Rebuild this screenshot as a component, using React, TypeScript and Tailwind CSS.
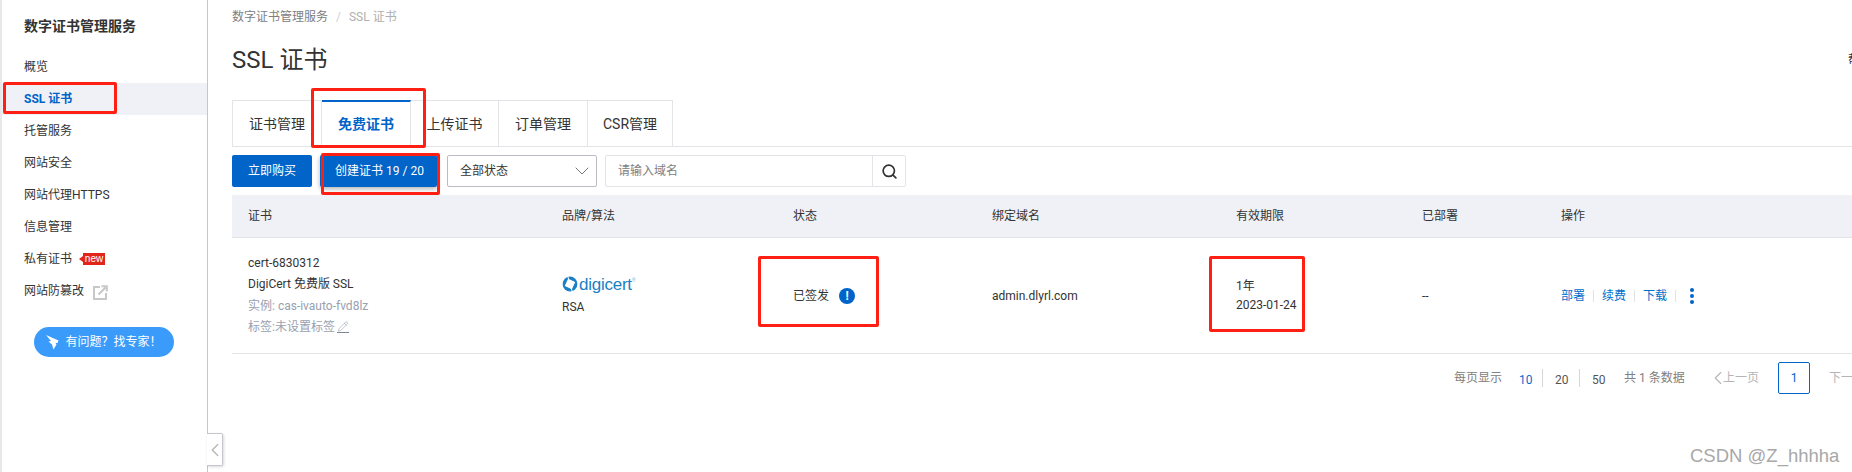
import React from 'react';
import { ChevronDown, ChevronLeft, Search, Pencil } from 'lucide-react';

const navItems = ['网站代理HTTPS', '信息管理'];

const columns = ['证书', '品牌/算法', '状态', '绑定域名', '有效期限', '已部署', '操作'];

const gridCols = 'grid grid-cols-[314px_231px_199px_244px_186px_139px_1fr]';

const NavItem: React.FC<{ active?: boolean; children: React.ReactNode }> = ({ active, children }) => (
  <div
    className={`flex h-8 items-center pl-[22px] text-xs ${
      active ? 'bg-[#eff1f6] font-bold text-[#0064c8]' : 'text-[#333333]'
    }`}
  >
    {children}
  </div>
);

const RedBox: React.FC<{ className: string }> = ({ className }) => (
  <div className={`pointer-events-none absolute rounded-[2px] border-[3px] border-[#ff2013] ${className}`} />
);

const Tab: React.FC<{ active?: boolean; className: string; children: React.ReactNode }> = ({
  active,
  className,
  children,
}) => (
  <div
    className={`relative flex h-[46px] items-center justify-center border-t border-r border-[#e3e4e8] text-sm ${className} ${
      active ? 'border-t-2 border-t-[#0064c8] font-bold text-[#0064c8]' : 'text-[#333333]'
    }`}
  >
    {children}
  </div>
);

const DigicertLogo = () => (
  <div className="flex h-[18px] items-center text-[#1a7fc4]">
    <svg width="16" height="18" viewBox="0 0 16 18" className="shrink-0">
      <circle cx="8" cy="9" r="7.4" fill="#1a7fc4" />
      <rect x="4" y="5" width="8" height="8" rx="0.8" fill="#ffffff" transform="rotate(25 8 9)" />
      <path d="M5.6 1L7 5.4M10.4 17L9 12.6" stroke="#ffffff" strokeWidth="1" />
    </svg>
    <span className="ml-px font-['Liberation_Sans',sans-serif] text-[17px] leading-none tracking-[-0.25px]">digicert</span>
    <span className="mb-2 text-[5px] leading-none text-[#8fc0e0]">®</span>
  </div>
);

export default function App() {
  return (
    <div className="relative flex h-[472px] w-[1852px] overflow-hidden bg-white font-['Roboto','Noto_Sans_CJK_SC',sans-serif] text-[#333333]">
      {/* Sidebar */}
      <aside className="relative h-full w-[208px] shrink-0 border-r border-l-2 border-r-[#c4c6cc] border-l-[#e8e8e8]">
        <div className="flex h-[51px] items-center pl-[22px] text-sm font-bold">数字证书管理服务</div>
        <div>
          <NavItem>概览</NavItem>
          <NavItem active>SSL 证书</NavItem>
          <NavItem>托管服务</NavItem>
          <NavItem>网站安全</NavItem>
          {navItems.map(item => (
            <NavItem key={item}>{item}</NavItem>
          ))}
          <NavItem>
            私有证书
            <span className="relative ml-[11px] flex h-3 w-[22px] items-center justify-center bg-[#e1251b] font-['Liberation_Sans',sans-serif] text-[10px] leading-none text-white before:absolute before:top-[3px] before:left-[-4px] before:border-y-[3px] before:border-r-[4px] before:border-y-transparent before:border-r-[#e1251b]">
              new
            </span>
          </NavItem>
          <NavItem>
            网站防篡改
            <svg width="15" height="15" viewBox="0 0 15 15" fill="none" className="mt-[2px] ml-[9px]">
              <path d="M7 2H1v12h12V8" stroke="#c8c8c8" strokeWidth="2" />
              <path d="M5.5 9.5L12.5 2.5M8.5 1.2h5.3v5.3" stroke="#c8c8c8" strokeWidth="2" />
            </svg>
          </NavItem>
        </div>
        <div className="mt-5 ml-8 flex h-[30px] w-[140px] items-center justify-center rounded-full bg-[#3a9bfb] text-xs text-white">
          <svg width="13" height="15" viewBox="0 0 13 15" className="mr-1.5">
            <path d="M0 0L12.5 5.5L11.5 8L9.5 8L10.5 9.5L7.5 14.5L6 9.5L2.5 6.5L5 6Z" fill="#ffffff" />
          </svg>
          有问题？找专家！
        </div>
        <div className="absolute top-[433px] left-[205px] flex h-[33px] w-4 items-center justify-center rounded-r-[2px] border border-l-0 border-[#c4c6cc] bg-white shadow-[1px_1px_3px_rgba(0,0,0,0.15)]">
          <ChevronLeft size={22} strokeWidth={1.4} className="shrink-0 text-[#b5b5b5]" />
        </div>
      </aside>

      {/* Main */}
      <main className="min-w-0 flex-1 pl-6">
        <div className="flex h-[33px] items-center text-xs text-[#808080]">
          数字证书管理服务
          <span className="mx-2 text-[#d0d0d0]">/</span>
          <span className="text-[#b0b0b0]">SSL 证书</span>
        </div>
        <div className="flex h-[54px] items-center">
          <h1 className="w-[1616px] shrink-0 text-[24px] leading-none font-normal text-[#333333]">SSL 证书</h1>
          <span className="shrink-0 text-xs whitespace-nowrap">帮助</span>
        </div>

        <div className="mt-[13px] flex border-b border-[#e3e4e8]">
          <Tab className="w-[90px] border-l">证书管理</Tab>
          <Tab active className="w-[89px]">免费证书</Tab>
          <Tab className="w-[88px]">上传证书</Tab>
          <Tab className="w-[89px]">订单管理</Tab>
          <Tab className="w-[85px]">CSR管理</Tab>
        </div>

        <div className="mt-2 flex h-8 items-start">
          <button className="h-8 w-20 rounded-[2px] bg-[#0064c8] text-xs text-white">立即购买</button>
          <button className="ml-2 h-8 w-[117px] rounded-[2px] bg-[#0064c8] pl-0.5 text-xs text-white shadow-[0_2px_5px_rgba(0,0,0,0.3)]">
            创建证书 19 / 20
          </button>
          <div className="ml-[10px] flex h-8 w-[150px] items-center justify-between rounded-[2px] border border-[#b9bcc4] pr-[2px] pl-[12px] text-xs">
            全部状态
            <ChevronDown size={24} strokeWidth={1} className="text-[#777777]" />
          </div>
          <div className="ml-2 flex h-8 w-[301px] items-center rounded-[2px] border border-[#e3e4e8] text-xs text-[#808080]">
            <span className="flex-1 pl-3">请输入域名</span>
            <div className="flex h-full w-[33px] items-center justify-center border-l border-[#e3e4e8]">
              <Search size={17} strokeWidth={2.4} className="text-[#333333]" />
            </div>
          </div>
        </div>

        <div className={`${gridCols} mt-2 h-[43px] items-center border-b border-[#e3e4e8] bg-[#eff1f6] text-xs`}>
          {columns.map(col => (
            <div key={col} className="pl-4">
              {col}
            </div>
          ))}
        </div>

        <div className={`${gridCols} h-[116px] items-center border-b border-[#e3e4e8] text-xs`}>
          <div className="pl-4 leading-[21.3px]">
            <div>cert-6830312</div>
            <div>DigiCert 免费版 SSL</div>
            <div className="text-[#97a0b0]">实例: cas-ivauto-fvd8lz</div>
            <div className="flex items-center text-[#97a0b0]">
              标签:未设置标签
              <Pencil size={12} strokeWidth={1.3} className="ml-[2px] border-b border-[#7d8798]" />
            </div>
          </div>
          <div className="pl-4">
            <DigicertLogo />
            <div className="mt-[5px] leading-[18px]">RSA</div>
          </div>
          <div className="flex items-center pl-4">
            已签发
            <span className="ml-[10px] flex h-4 w-4 items-center justify-center rounded-full bg-[#0064c8] text-[12px] leading-none font-bold text-white">
              !
            </span>
          </div>
          <div className="pl-4">admin.dlyrl.com</div>
          <div className="pl-4 leading-[19px]">
            <div>1年</div>
            <div>2023-01-24</div>
          </div>
          <div className="pl-4">--</div>
          <div className="flex items-center pl-4 text-[#0070cc]">
            <span>部署</span>
            <span className="mx-2 h-3 w-px bg-[#e3e4e8]" />
            <span>续费</span>
            <span className="mx-2 h-3 w-px bg-[#e3e4e8]" />
            <span>下载</span>
            <span className="mr-[14px] ml-2 h-3 w-px bg-[#e3e4e8]" />
            <span className="flex flex-col gap-[2px]">
              <span className="h-1 w-1 rounded-full bg-[#0064c8]" />
              <span className="h-1 w-1 rounded-full bg-[#0064c8]" />
              <span className="h-1 w-1 rounded-full bg-[#0064c8]" />
            </span>
          </div>
        </div>

        <div className="mt-2 flex h-8 items-center pl-[1222px] text-xs whitespace-nowrap text-[#808080]">
          <span className="shrink-0">每页显示</span>
          <span className="mt-1 ml-[17px] w-3 shrink-0 text-[#0070cc]">10</span>
          <span className="mr-[12px] ml-[11px] h-[18px] w-px shrink-0 bg-[#d5d6da]" />
          <span className="mt-1 w-3 shrink-0 text-[#555555]">20</span>
          <span className="mx-[12px] h-[18px] w-px shrink-0 bg-[#d5d6da]" />
          <span className="mt-1 w-3 shrink-0 text-[#555555]">50</span>
          <span className="ml-[20px] w-[60px] shrink-0">共 1 条数据</span>
          <span className="ml-[29px] flex shrink-0 items-center text-[#b5b5b5]">
            <ChevronLeft size={22} strokeWidth={1.2} className="-mx-1.5 shrink-0" />
            上一页
          </span>
          <span className="ml-[19px] flex h-8 w-8 shrink-0 items-center justify-center rounded-[2px] border border-[#0064c8] text-[#0064c8]">
            1
          </span>
          <span className="ml-[19px] shrink-0 text-[#b5b5b5]">下一页</span>
        </div>
      </main>

      {/* Annotations over the page */}
      <RedBox className="top-[82px] left-[3px] h-[32px] w-[114px]" />
      <RedBox className="top-[88px] left-[311px] h-[60px] w-[115px]" />
      <RedBox className="top-[153px] left-[321px] h-[42px] w-[119px]" />
      <RedBox className="top-[256px] left-[758px] h-[71px] w-[121px]" />
      <RedBox className="top-[256px] left-[1209px] h-[76px] w-[96px]" />
      <div className="absolute top-[445px] left-[1690px] font-['Liberation_Sans',sans-serif] text-[18.5px] leading-[22px] text-[#a8a8a8]">
        CSDN @Z_hhhha
      </div>
    </div>
  );
}
